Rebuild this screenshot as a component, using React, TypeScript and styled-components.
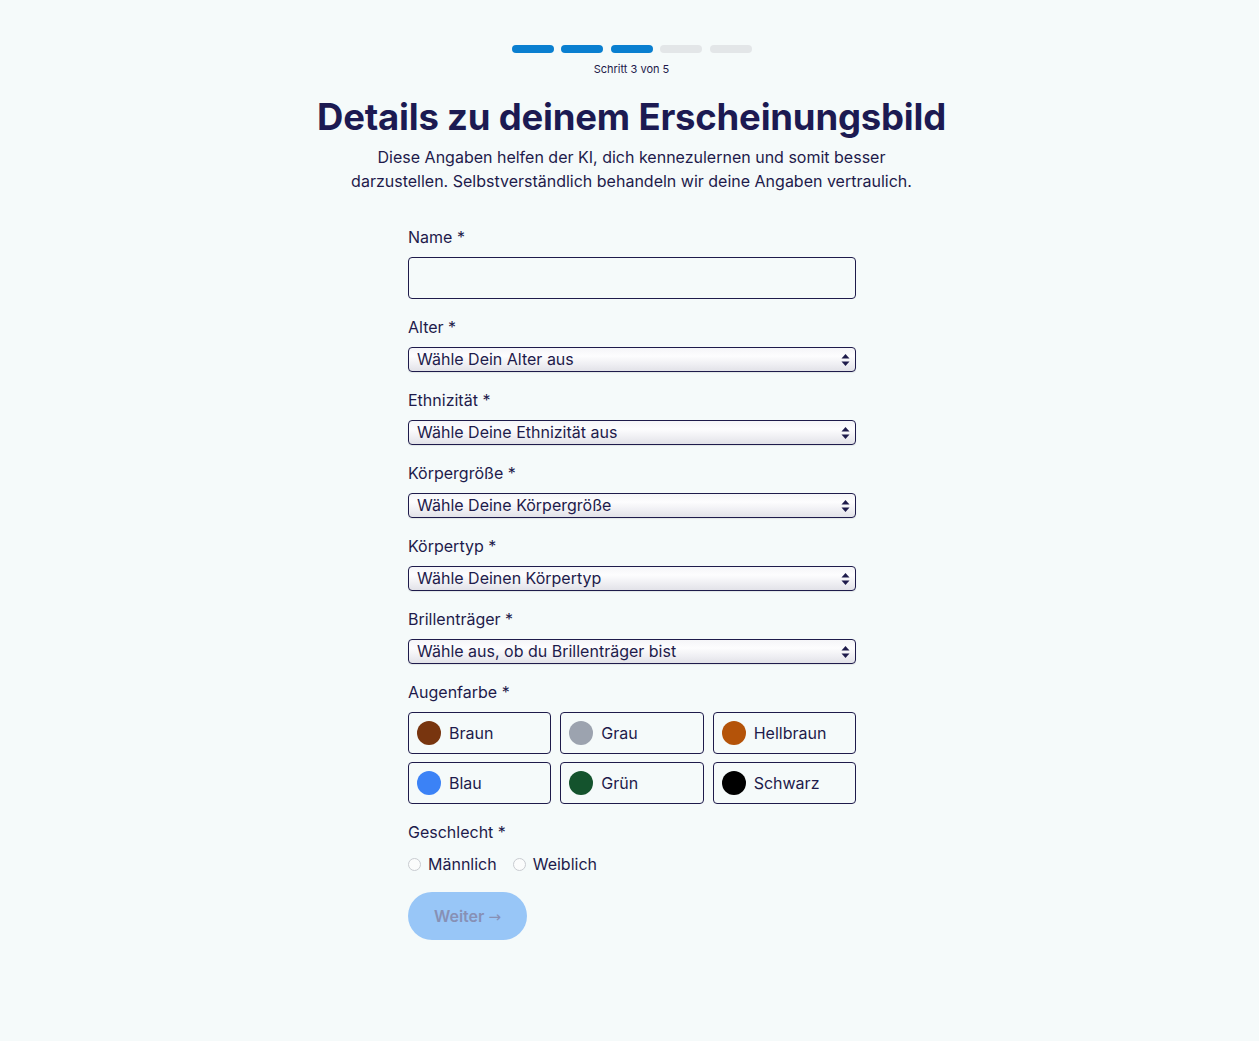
import React from 'react'
import styled, { createGlobalStyle } from 'styled-components'

const GlobalStyle = createGlobalStyle`
  html, body {
    margin: 0;
    padding: 0;
    background: #f5fafa;
  }
  body {
    font-family: Inter, "Noto Sans", Arial, sans-serif;
    color: #1e1b4b;
  }
  * {
    box-sizing: border-box;
  }
`

const Page = styled.div`
  min-height: 100vh;
  display: flex;
  flex-direction: column;
  align-items: center;
  padding: 45px 0 80px 4px;
`

const Progress = styled.div`
  display: flex;
  gap: 7.5px;
`

const Step = styled.div<{ $active: boolean }>`
  width: 42px;
  height: 8px;
  border-radius: 999px;
  background: ${(p) => (p.$active ? '#0a7fd0' : '#e3e6e8')};
`

const StepText = styled.div`
  margin-top: 8px;
  font-size: 11px;
  line-height: 16px;
  color: #1e1b4b;
`

const Title = styled.h1`
  margin: 20px 0 0;
  font-size: 36.5px;
  line-height: 40px;
  font-weight: 700;
  letter-spacing: -0.2px;
  color: #1c1a52;
  text-align: center;
`

const Lead = styled.p`
  margin: 8px 0 0;
  max-width: 580px;
  font-size: 16px;
  line-height: 24px;
  text-align: center;
  color: #1e1b4b;
`

const Form = styled.form`
  margin: 32px 0 0 1px;
  width: 448px;
  display: flex;
  flex-direction: column;
  gap: 16px;
`

const Field = styled.div`
  display: flex;
  flex-direction: column;
  gap: 8px;
`

const Label = styled.label`
  font-size: 16px;
  line-height: 24px;
  color: #1e1b4b;
`

const TextInput = styled.input`
  height: 42px;
  width: 100%;
  border: 1px solid #1e1b4b;
  border-radius: 4px;
  background: #f5fafa;
  font: inherit;
  padding: 0 10px;
`

const SelectWrap = styled.div`
  position: relative;
  height: 25px;
  svg {
    position: absolute;
    right: 5px;
    top: 6px;
    pointer-events: none;
  }
`

const Select = styled.select`
  appearance: none;
  width: 100%;
  height: 25px;
  border: 1px solid #1e1b4b;
  border-radius: 4px;
  padding: 0 24px 2px 8px;
  font-family: Inter, "Noto Sans", Arial, sans-serif;
  font-size: 16px;
  color: #1e1b4b;
  background: linear-gradient(#f5f5f8 0%, #fdfdfe 35%, #efeff3 70%, #e2e2e8 100%);
  box-shadow: 0 1px 1px rgba(0, 0, 0, 0.08);
`

const ColorGrid = styled.div`
  display: grid;
  grid-template-columns: repeat(3, 1fr);
  gap: 8px 9px;
`

const ColorOption = styled.button`
  height: 42px;
  display: flex;
  align-items: center;
  gap: 8px;
  padding: 0 8px;
  border: 1px solid #1e1b4b;
  border-radius: 4px;
  background: transparent;
  font-family: Inter, "Noto Sans", Arial, sans-serif;
  font-size: 16px;
  color: #1e1b4b;
  cursor: pointer;
  text-align: left;
`

const Dot = styled.span<{ $color: string }>`
  width: 24px;
  height: 24px;
  border-radius: 50%;
  background: ${(p) => p.$color};
  flex-shrink: 0;
`

const RadioRow = styled.div`
  display: flex;
  align-items: center;
  gap: 16px;
  height: 24px;
`

const RadioLabel = styled.label`
  display: flex;
  align-items: center;
  gap: 7px;
  font-size: 16px;
  color: #1e1b4b;
`

const RadioCircle = styled.span`
  width: 13px;
  height: 13px;
  border-radius: 50%;
  border: 1px solid #c9ccd1;
  background: #fbfcfc;
`

const Submit = styled.button`
  align-self: flex-start;
  width: 119px;
  height: 48px;
  border: none;
  border-radius: 999px;
  background: #98c6f7;
  color: #8790b5;
  font-family: Inter, "Noto Sans", Arial, sans-serif;
  font-size: 16px;
  font-weight: 600;
  cursor: not-allowed;
`

const ArrowGlyph = styled.span`
  font-family: "DejaVu Sans", sans-serif;
  font-weight: 400;
  font-size: 15px;
`

const selects = [
  { label: 'Alter *', placeholder: 'Wähle Dein Alter aus' },
  { label: 'Ethnizität *', placeholder: 'Wähle Deine Ethnizität aus' },
  { label: 'Körpergröße *', placeholder: 'Wähle Deine Körpergröße' },
  { label: 'Körpertyp *', placeholder: 'Wähle Deinen Körpertyp' },
  { label: 'Brillenträger *', placeholder: 'Wähle aus, ob du Brillenträger bist' },
]

const eyeColors = [
  { name: 'Braun', color: '#78350f' },
  { name: 'Grau', color: '#9ca3af' },
  { name: 'Hellbraun', color: '#b45309' },
  { name: 'Blau', color: '#3b82f6' },
  { name: 'Grün', color: '#14532d' },
  { name: 'Schwarz', color: '#000000' },
]

const Arrows = () => (
  <svg width="11" height="14" viewBox="0 0 11 14">
    <path d="M5.5 1 L9.5 5.5 H1.5 Z" fill="#1e1b4b" />
    <path d="M5.5 13 L9.5 8.5 H1.5 Z" fill="#1e1b4b" />
  </svg>
)

export default function App() {
  return (
    <>
      <GlobalStyle />
      <Page>
        <Progress>
          {[1, 2, 3, 4, 5].map((i) => (
            <Step key={i} $active={i <= 3} />
          ))}
        </Progress>
        <StepText>Schritt 3 von 5</StepText>
        <Title>Details zu deinem Erscheinungsbild</Title>
        <Lead>
          Diese Angaben helfen der KI, dich kennezulernen und somit besser
          darzustellen. Selbstverständlich behandeln wir deine Angaben vertraulich.
        </Lead>
        <Form onSubmit={(e) => e.preventDefault()}>
          <Field>
            <Label>Name *</Label>
            <TextInput type="text" />
          </Field>
          {selects.map((s) => (
            <Field key={s.label}>
              <Label>{s.label}</Label>
              <SelectWrap>
                <Select defaultValue="">
                  <option value="">{s.placeholder}</option>
                </Select>
                <Arrows />
              </SelectWrap>
            </Field>
          ))}
          <Field>
            <Label>Augenfarbe *</Label>
            <ColorGrid>
              {eyeColors.map((c) => (
                <ColorOption type="button" key={c.name}>
                  <Dot $color={c.color} />
                  {c.name}
                </ColorOption>
              ))}
            </ColorGrid>
          </Field>
          <Field>
            <Label>Geschlecht *</Label>
            <RadioRow>
              <RadioLabel>
                <RadioCircle />
                Männlich
              </RadioLabel>
              <RadioLabel>
                <RadioCircle />
                Weiblich
              </RadioLabel>
            </RadioRow>
          </Field>
          <Submit type="submit" disabled>
            Weiter <ArrowGlyph>→</ArrowGlyph>
          </Submit>
        </Form>
      </Page>
    </>
  )
}
